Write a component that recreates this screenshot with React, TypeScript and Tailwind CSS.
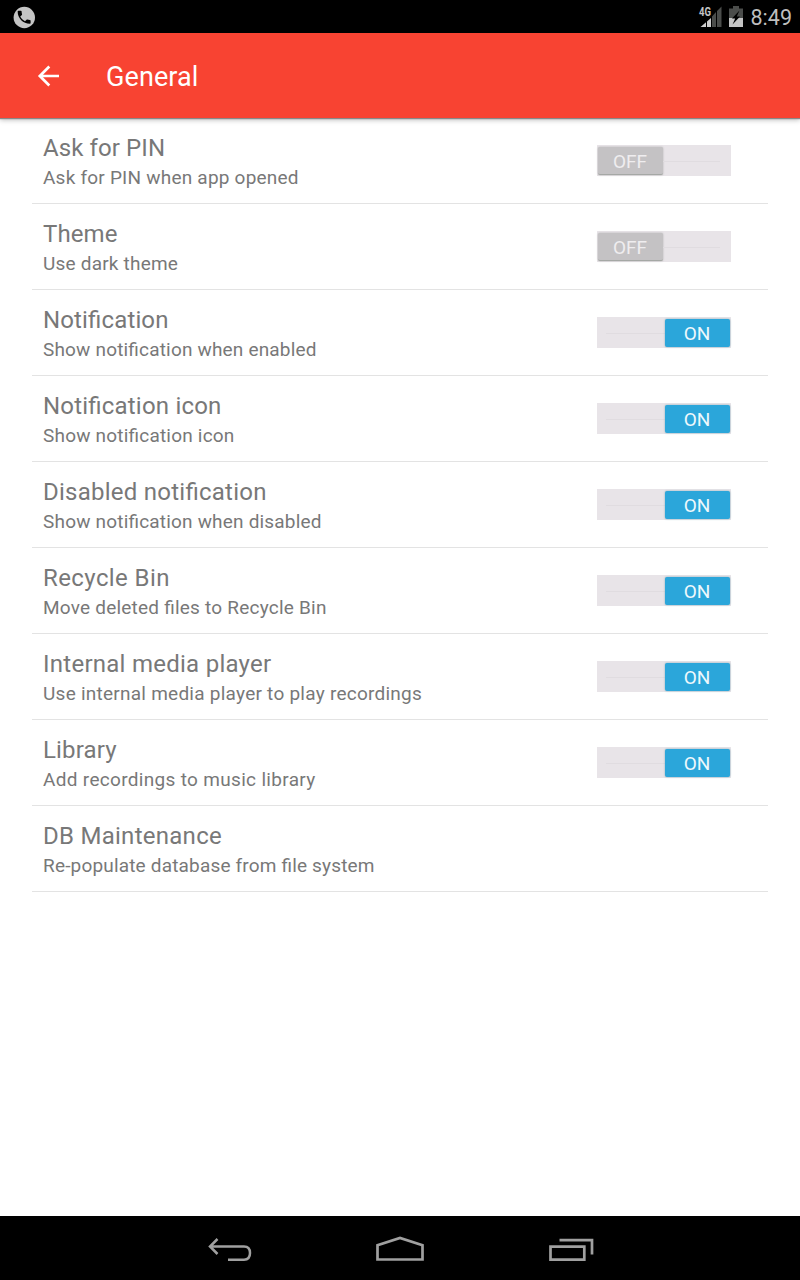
type Row = { title: string; titleClass: string; sub: string; subClass: string; on?: boolean };

const rows: Row[] = [
  { title: 'Ask for PIN', titleClass: 'tracking-[0.1px]', sub: 'Ask for PIN when app opened', subClass: 'tracking-[0.22px]', on: false },
  { title: 'Theme', titleClass: 'tracking-[0.1px]', sub: 'Use dark theme', subClass: 'tracking-[0.2px]', on: false },
  { title: 'Notification', titleClass: 'tracking-[0.14px]', sub: 'Show notification when enabled', subClass: 'tracking-[0.18px]', on: true },
  { title: 'Notification icon', titleClass: 'tracking-[0.2px]', sub: 'Show notification icon', subClass: 'tracking-[0.2px]', on: true },
  { title: 'Disabled notification', titleClass: 'tracking-[0.25px]', sub: 'Show notification when disabled', subClass: 'tracking-[0.19px]', on: true },
  { title: 'Recycle Bin', titleClass: 'tracking-[0.4px]', sub: 'Move deleted files to Recycle Bin', subClass: 'tracking-[0.22px]', on: true },
  { title: 'Internal media player', titleClass: 'tracking-[0.26px]', sub: 'Use internal media player to play recordings', subClass: 'tracking-[0.25px]', on: true },
  { title: 'Library', titleClass: 'tracking-[0.15px]', sub: 'Add recordings to music library', subClass: 'tracking-[0.32px]', on: true },
  { title: 'DB Maintenance', titleClass: 'tracking-[0.27px]', sub: 'Re-populate database from file system', subClass: 'tracking-[0.175px]' },
];

function Toggle({ on }: { on: boolean }) {
  return (
    <div className={`flex h-[31px] w-[134px] items-center bg-[#e8e4e8] pt-px ${on ? 'justify-end pr-px' : 'justify-start pl-px'}`}>
      {on && <div className="ml-[9px] h-px flex-1 bg-[#e0dce0]" />}
      <div
        className={`flex h-[28px] w-[65px] items-center justify-center rounded-[2px] pr-px text-[19px] leading-none ${
          on ? 'bg-[#2ba6da] text-[#eef8fc] shadow-[0_0_2px_#7ba5b5]' : 'border-b border-[#a5a8a5] bg-[#c4c2c4] pt-px text-[#efedef] shadow-[0_0_2px_#aaa]'
        }`}
      >
        {on ? 'ON' : 'OFF'}
      </div>
      {!on && <div className="mr-[11px] h-px flex-1 bg-[#e0dce0]" />}
    </div>
  );
}

function StatusBar() {
  return (
    <div className="relative z-20 flex h-[33px] shrink-0 items-center justify-between bg-black pl-3 pr-2">
      <svg width="24" height="24" viewBox="0 0 24 24">
        <circle cx="12.3" cy="12.5" r="10.7" fill="#c4c4c4" />
        <path
          transform="translate(3.5 3.7) scale(0.72)"
          fill="#000"
          d="M6.6 10.8c1.4 2.8 3.8 5.1 6.6 6.6l2.2-2.2c.3-.3.7-.4 1-.2 1.100.4 2.300.6 3.600.6.6 0 1 .4 1 1V20c0 .6-.4 1-1 1C10.600 21 3 13.400 3 4c0-.6.4-1 1-1h3.500c.6 0 1 .4 1 1 0 1.200.2 2.400.6 3.600.1.3 0 .7-.2 1z"
        />
      </svg>
      <div className="flex items-center">
        <svg className="mr-[7px] overflow-visible" width="23" height="22" viewBox="0 0 23 22">
          <path d="M1.500 21 L7 16.300 V21Z M8 15.500 L12 12 V21 H8Z" fill="#cfcfcf" />
          <path d="M13 10.500 L17 6 V21 H13Z M18 5 L22.500 .5 V21 H18Z" fill="#4b4d4b" />
          <text x="0" y="9.800" fontSize="12.500" fontWeight="700" fontFamily="Roboto" fill="#c4c4c4" textLength="12" lengthAdjust="spacingAndGlyphs">4G</text>
        </svg>
        <svg className="mr-2" width="14" height="22" viewBox="0 0 14 22">
          <path d="M4 0 H10 V2.500 H14 V12 H0 V2.500 H4Z" fill="#4b4d4b" />
          <path d="M0 12 H14 V21 H0Z" fill="#c4c4c4" />
          <path d="M10.500 4.500 L3 12.500 H6.200 L3.500 18.500 L11 10.500 H7.800Z" fill="#000" />
        </svg>
        <span className="pt-[3px] text-[21.500px] leading-none text-[#bebebe]">8:49</span>
      </div>
    </div>
  );
}

export default function App() {
  return (
    <div className="flex h-[1280px] w-[800px] flex-col bg-white font-[Roboto,sans-serif]">
      <StatusBar />
      <header className="z-10 flex h-[85px] shrink-0 items-center bg-[#f84332] pl-[37px] text-white shadow-[0_1px_1px_#888,0_2px_5px_#bbb]">
        <svg width="24" height="24" viewBox="0 0 24 24" fill="none" stroke="#fff" strokeWidth="2.700">
          <path d="M22 12 H3 M12.300 2.500 L2.800 12 L12.300 21.500" />
        </svg>
        <span className="ml-[45px] pt-[3px] text-[27px] font-[450] leading-none tracking-[0.1px]">General</span>
      </header>
      <main className="flex-1 px-8">
        {rows.map((r) => (
          <div key={r.title} className="flex h-[86px] items-center justify-between border-b border-[#e3e3e3] pl-[11px] pr-[37px]">
            <div className="pt-[5px] text-[#787878] [font-feature-settings:'liga'_1]">
              <div className={`text-[24px] leading-[30px] ${r.titleClass}`}>{r.title}</div>
              <div className={`text-[19px] leading-[30px] ${r.subClass}`}>{r.sub}</div>
            </div>
            {r.on !== undefined && <Toggle on={r.on} />}
          </div>
        ))}
      </main>
      <nav className="flex h-16 shrink-0 items-start bg-black pl-[208px] pt-5">
        <svg width="44" height="27" viewBox="0 0 44 27" fill="none" stroke="#a0a0a0" strokeWidth="2.500">
          <path d="M2 10.500 H36 Q42 10.500 42 17 Q42 23.700 36 23.700 H20 M9.500 3 L2 10.500 L9.500 18" />
        </svg>
        <svg className="ml-[124px]" width="48" height="27" viewBox="0 0 48 27" fill="none" stroke="#a0a0a0" strokeWidth="2.700">
          <path d="M1.500 23.500 V9.300 L24 2 L46.500 9.300 V23.500Z" />
        </svg>
        <svg className="ml-[125px]" width="45" height="27" viewBox="0 0 45 27" fill="none" stroke="#a0a0a0" strokeWidth="2.700">
          <path d="M1.500 10.600 H35.300 V23.700 H1.500Z M10.500 4.200 H43 V18.500" />
        </svg>
      </nav>
    </div>
  );
}
